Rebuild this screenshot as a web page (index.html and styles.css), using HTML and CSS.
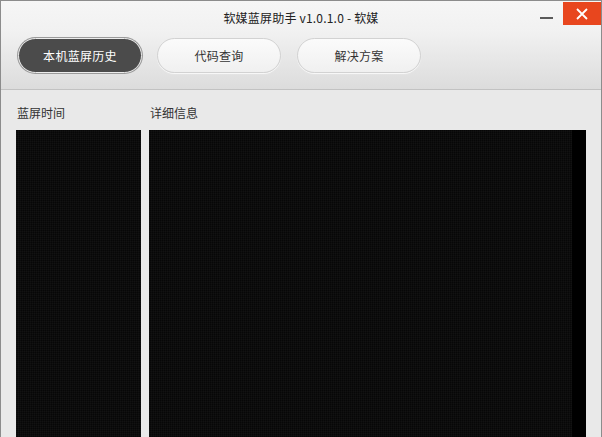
FILE: index.html
```html
<!DOCTYPE html>
<html lang="zh-CN">
<head>
    <meta charset="UTF-8">
    <title>软媒蓝屏助手</title>
    <link rel="stylesheet" href="styles.css">
</head>
<body>
    <div class="window">
        <div class="header">
            <div class="titlebar">
                <span></span>
                <div class="title">软媒蓝屏助手 v1.0.1.0 - 软媒</div>
                <div class="controls">
                    <div class="btn-min"><span></span></div>
                    <div class="btn-close">
                        <svg width="14" height="14" viewBox="0 0 14 14">
                            <path d="M2 2 L12 12 M12 2 L2 12" stroke="#fff" stroke-width="1.8" fill="none"/>
                        </svg>
                    </div>
                </div>
            </div>
            <div class="tabs">
                <div class="tab active">本机蓝屏历史</div>
                <div class="tab">代码查询</div>
                <div class="tab">解决方案</div>
            </div>
        </div>

        <div class="content">
            <div class="col col-time">
                <div class="label">蓝屏时间</div>
                <div class="panel"></div>
            </div>
            <div class="col col-detail">
                <div class="label">详细信息</div>
                <div class="panel panel-detail">
                    <div class="scroll"></div>
                </div>
            </div>
        </div>
    </div>
</body>
</html>
```

FILE: styles.css
```css
html, body {
    margin: 0;
    padding: 0;
    overflow: hidden;
}
body {
    font-family: "Noto Sans CJK SC", "Liberation Sans", sans-serif;
    background-color: #e9e9e9;
}
.window {
    width: 602px;
    height: 437px;
    box-sizing: border-box;
    border: 1px solid #8c8c8c;
    border-bottom: none;
    background-color: #e9e9e9;
    overflow: hidden;
}
.header {
    height: 88px;
    background: linear-gradient(#f6f6f6, #f1f1f1 35%, #dcdcdc);
    border-bottom: 1px solid #c2c2c2;
}
.titlebar {
    display: grid;
    grid-template-columns: 1fr auto 1fr;
    height: 36px;
}
.title {
    font-size: 12px;
    color: #222;
    padding-top: 8px;
    letter-spacing: 0.2px;
}
.controls {
    display: flex;
    justify-content: flex-end;
    align-items: flex-start;
    padding-top: 1px;
}
.btn-min {
    width: 20px;
    height: 23px;
    margin-right: 7px;
    display: flex;
    align-items: center;
    justify-content: center;
}
.btn-min span {
    display: block;
    width: 13px;
    height: 2px;
    margin-top: 8px;
    background-color: #5a5a5a;
}
.btn-close {
    width: 38px;
    height: 23px;
    background-color: #e8461e;
    display: flex;
    align-items: center;
    justify-content: center;
}
.tabs {
    display: flex;
    gap: 15px;
    padding-left: 17px;
    padding-top: 1px;
}
.tab {
    width: 124px;
    height: 35px;
    box-sizing: border-box;
    border-radius: 18px;
    border: 1px solid #d2d2d2;
    background: linear-gradient(#fbfbfb, #f0f0f0);
    box-shadow: 0 1px 1px rgba(255,255,255,0.8);
    font-size: 12px;
    color: #333;
    display: flex;
    align-items: center;
    justify-content: center;
    letter-spacing: 0.3px;
}
.tab:last-child {
    margin-left: 1px;
}
.tab.active {
    background: #4b4b4b;
    border: 1px solid #ececec;
    box-shadow: 0 0 0 1px #9a9a9a;
    color: #fff;
}
.content {
    display: flex;
    gap: 8px;
    padding-left: 15px;
}
.label {
    font-size: 12px;
    color: #333;
    height: 40px;
    line-height: 46px;
    padding-left: 1px;
}
.col-time {
    width: 125px;
}
.col-detail {
    width: 437px;
}
.panel {
    height: 320px;
    background-color: #070707;
    background-image:
        repeating-linear-gradient(90deg, rgba(255,255,255,0.025) 0 1px, transparent 1px 2px),
        repeating-linear-gradient(0deg, rgba(255,255,255,0.02) 0 1px, transparent 1px 2px);
}
.panel-detail {
    display: flex;
    justify-content: flex-end;
}
.scroll {
    width: 14px;
    background-color: #000;
}
```
